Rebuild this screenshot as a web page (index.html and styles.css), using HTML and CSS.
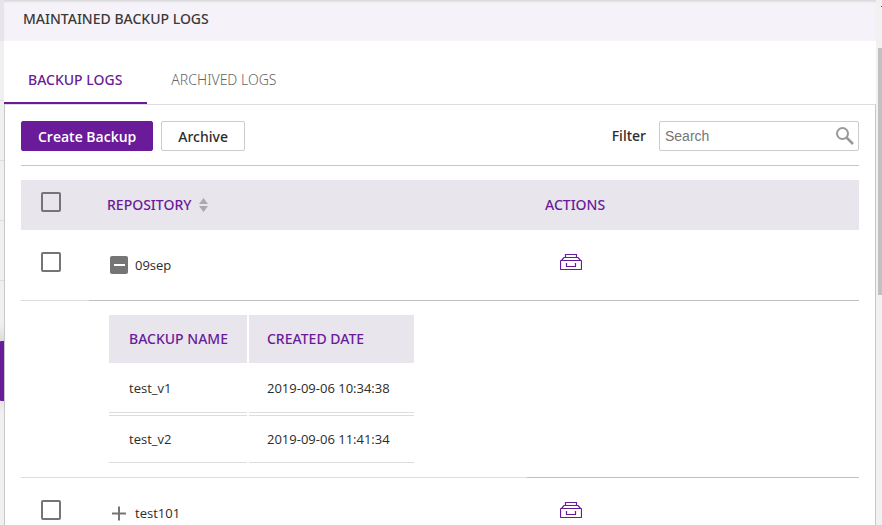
FILE: index.html
```html
<!DOCTYPE html>
<html lang="en">
<head>
<meta charset="utf-8">
<title>Maintained Backup Logs</title>
<link rel="stylesheet" href="styles.css">
</head>
<body>
<svg class="sprite" aria-hidden="true">
  <symbol id="drawer" viewBox="0 0 22 16">
    <path d="M1 6.500h20q.5 0 .5.5v8q0 .5-.5.5H1q-.5 0-.5-.5V7q0-.5.5-.5zM1.500 6.500L4 3.500h14l2.500 3M5.500 3V.5h11V3M6.500 9v3.500h9V9" fill="none" stroke="currentColor" stroke-width="1.200"/>
  </symbol>
</svg>
<div class="app">
  <div class="rail" aria-hidden="true">
    <div class="rail-top"></div>
    <div class="rail-item"></div>
    <div class="rail-item"></div>
    <div class="rail-item"></div>
    <div class="rail-item"></div>
    <div class="rail-item rail-last"></div>
    <div class="rail-active"></div>
  </div>
  <main class="main">
    <header class="title-bar"><h1>MAINTAINED BACKUP LOGS</h1></header>
    <nav class="tabs">
      <a class="tab tab-active" href="#backup">BACKUP LOGS</a>
      <a class="tab" href="#archived">ARCHIVED LOGS</a>
    </nav>
    <section class="panel">
      <div class="toolbar">
        <button class="btn btn-primary" type="button">Create Backup</button>
        <button class="btn" type="button">Archive</button>
        <label class="filter-label" for="filter">Filter</label>
        <div class="search">
          <input id="filter" type="text" placeholder="Search">
          <svg class="search-icon" viewBox="0 0 18 18" aria-hidden="true"><circle cx="6.500" cy="6.500" r="5.500" fill="none" stroke="currentColor" stroke-width="2"/><path d="M10.500 10.500L17 17" stroke="currentColor" stroke-width="2.500"/></svg>
        </div>
      </div>
      <table class="logs">
        <colgroup><col class="col-check"><col class="col-repo"><col></colgroup>
        <thead>
          <tr>
            <th class="check"><input type="checkbox" aria-label="Select all"></th>
            <th><span class="sortable">REPOSITORY <svg class="sort" viewBox="0 0 9 14" aria-hidden="true"><path d="M4.500 0L9 6H0zM0 8h9l-4.500 6z" fill="currentColor"/></svg></span></th>
            <th>ACTIONS</th>
          </tr>
        </thead>
        <tbody>
          <tr class="repo-row">
            <td class="check light"><input type="checkbox" aria-label="Select 09sep"></td>
            <td><span class="repo"><button class="toggle" type="button" aria-label="Collapse 09sep"><svg viewBox="0 0 18 18"><rect width="18" height="18" rx="2" fill="currentColor"/><path d="M4 9h11" stroke="#fff" stroke-width="2"/></svg></button>09sep</span></td>
            <td><button class="action" type="button" aria-label="Archive 09sep"><svg><use href="#drawer"/></svg></button></td>
          </tr>
          <tr class="detail-row">
            <td class="light"></td>
            <td class="light">
              <table class="versions">
                <thead><tr><th>BACKUP NAME</th><th>CREATED DATE</th></tr></thead>
                <tbody>
                  <tr><td>test_v1</td><td>2019-09-06 10:34:38</td></tr>
                  <tr><td>test_v2</td><td>2019-09-06 11:41:34</td></tr>
                </tbody>
              </table>
            </td>
            <td></td>
          </tr>
          <tr class="repo-row">
            <td class="check light"><input type="checkbox" aria-label="Select test101"></td>
            <td><span class="repo"><button class="toggle" type="button" aria-label="Expand test101"><svg viewBox="0 0 18 18"><path d="M2 9.500h14M9 2.500v14" stroke="currentColor" stroke-width="2"/></svg></button>test101</span></td>
            <td><button class="action" type="button" aria-label="Archive test101"><svg><use href="#drawer"/></svg></button></td>
          </tr>
        </tbody>
      </table>
    </section>
  </main>
  <div class="scroll-track" aria-hidden="true"><div class="scroll-tick"></div><div class="scroll-thumb"></div></div>
</div>
</body>
</html>
```

FILE: styles.css
```css
* { box-sizing: border-box; }

body {
  margin: 0;
  overflow: hidden;
  font: 13px/20px "Open Sans", "Noto Sans", sans-serif;
  color: #2b2b2b;
  background: #fff;
}

button { padding: 0; border: 0; background: none; font: inherit; color: inherit; }

.sprite { display: none; }

.app { display: flex; height: 100vh; overflow: hidden; }

/* Edge of the side navigation */
.rail { flex: 0 0 4px; background: #f0f0f0; overflow: hidden; }
.rail-top { height: 41px; background: #e7e4eb; }
.rail-item { height: 60px; border-bottom: 1px solid #ddd; }
.rail-last { border: 0; background: linear-gradient(#f0f0f0 70%, #ddd); }
.rail-active {
  height: 60px;
  background: #6a1b9a;
  border-radius: 1px 0 0 1px;
  box-shadow: 0 4px 12px #bbb;
}

.main { flex: 1; min-width: 0; }

.title-bar {
  height: 41px;
  padding: 9px 19px;
  background: #f5f3f9;
  box-shadow: inset 0 3px 3px -2px #ccc;
}
h1 { margin: 0; font: 500 14px/20px "Noto Sans", sans-serif; color: #3a3a3a; }

.tabs { display: flex; height: 63px; padding-top: 14px; }
.tab {
  padding: 15px 24px 0;
  font: 300 14px/20px "Noto Sans", sans-serif;
  color: #666;
  text-decoration: none;
}
.tab-active { padding-right: 25px; border-bottom: 2px solid #6a1b9a; font-weight: 500; color: #6a1b9a; }

.panel {
  min-height: 100%;
  padding: 16px;
  border: 1px solid #c8c8c8;
  border-top-color: #ddd;
}

.toolbar {
  display: flex;
  align-items: center;
  height: 45px;
  padding-bottom: 14px;
  margin-bottom: 14px;
  border-bottom: 1px solid #c8c8c8;
}
.btn {
  height: 30px;
  padding: 1px 16px 0;
  margin-right: 8px;
  border: 1px solid #ccc;
  border-radius: 2px;
  font-size: 14px;
  font-weight: 500;
  background: #fff;
}
.btn-primary { border-color: #6a1b9a; background: #6a1b9a; color: #fff; font-weight: 600; }
.filter-label { margin: 0 13px 0 auto; font-size: 14px; font-weight: 500; }
.search { position: relative; width: 200px; height: 30px; }
.search input {
  width: 100%;
  height: 100%;
  padding: 0 30px 0 5px;
  border: 1px solid #ccc;
  border-radius: 2px;
  font: 14px "Liberation Sans", Arial, sans-serif;
  background: #fff;
}
.search input::placeholder { color: #757575; opacity: 1; }
.search-icon { position: absolute; right: 5px; top: 6px; width: 18px; height: 18px; color: #999; }

.logs { width: 100%; table-layout: fixed; border-collapse: separate; border-spacing: 0; }
.col-check { width: 68px; }
.col-repo { width: 438px; }

th {
  height: 50px;
  padding: 0 18px;
  background: #e8e5ec;
  color: #6a1b9a;
  font-size: 14px;
  font-weight: 500;
  text-align: left;
}
.sortable, .repo { display: flex; align-items: center; }
.sort { width: 9px; height: 14px; margin-left: 8px; color: #aaa; }
th, .btn:not(.btn-primary), .filter-label { font-family: "Noto Sans", sans-serif; }

.logs td { padding: 0 18px; border-bottom: 1px solid #c0c0c0; }
.logs td.light { border-color: #ddd; }
.repo-row td { height: 71px; }
.logs .check { padding: 0 20px 6px; }

input[type="checkbox"] {
  display: block;
  appearance: none;
  width: 20px;
  height: 20px;
  margin: 0;
  border: 2px solid #757575;
  border-radius: 2px;
}

.repo { gap: 7px; padding-left: 3px; }
.toggle { width: 18px; height: 18px; color: #757575; }
.toggle svg { display: block; width: 18px; height: 18px; }
.action { display: block; margin-left: 15px; padding-bottom: 6px; color: #6a1b9a; }
.action svg { display: block; width: 22px; height: 16px; }

.logs .detail-row > td { padding-top: 12px; padding-bottom: 12px; }

.versions { border-collapse: separate; border-spacing: 2px; }
.versions th { height: 48px; padding: 0 19px 0 20px; }
.versions th + th { padding-left: 18px; }
.logs .versions td { height: 48px; padding: 0 18px 1px 20px; border-color: #ddd; }
.logs .versions td + td { padding: 0 24px 1px 18px; }
.logs .versions tr + tr td { border-top: 1px solid #ddd; }

.scroll-track { flex: 0 0 6px; padding-left: 2px; background: #f1f1f1; }
.scroll-tick { width: 1px; height: 48px; margin-left: auto; background: linear-gradient(#555, #555) 0 6px / 1px 1px no-repeat; }
.scroll-thumb { height: 247px; background: #c1c1c1; }
```
